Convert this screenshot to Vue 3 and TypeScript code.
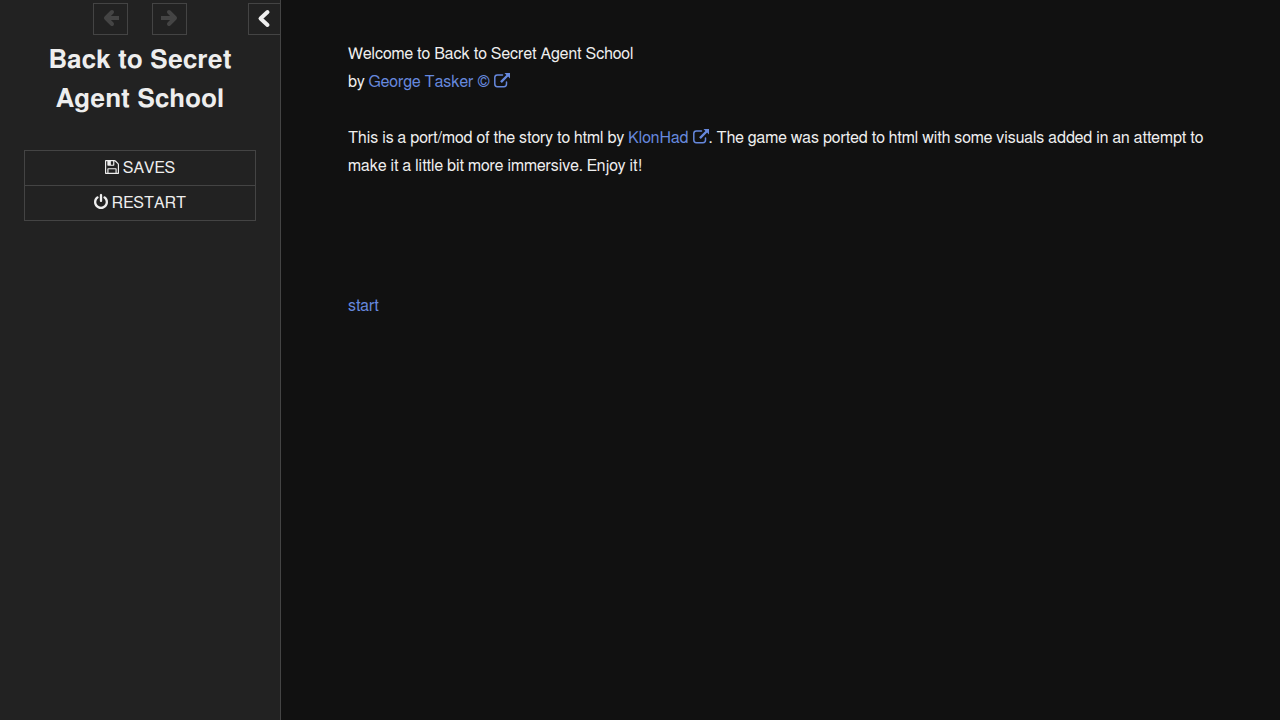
<script setup lang="ts">
import { ref } from 'vue'

const stowed = ref(false)

const icons = {
  save: 'M512 1536h768v-384h-768v384zm896 0h128v-896q0-14-10-38.5t-20-34.5l-281-281q-10-10-34-20t-39-10v416q0 40-28 68t-68 28h-576q-40 0-68-28t-28-68v-416h-128v1280h128v-416q0-40 28-68t68-28h832q40 0 68 28t28 68v416zm-384-928v-320q0-13-9.5-22.5t-22.5-9.5h-192q-13 0-22.5 9.5t-9.5 22.5v320q0 13 9.5 22.5t22.5 9.5h192q13 0 22.5-9.5t9.5-22.5zm640 32v928q0 40-28 68t-68 28h-1344q-40 0-68-28t-28-68v-1344q0-40 28-68t68-28h928q40 0 88 20t76 48l280 280q28 28 48 76t20 88z',
  power: 'M1664 896q0 156-61 298t-164 245-245 164-298 61-298-61-245-164-164-245-61-298q0-182 80.5-343t226.5-270q43-32 95.5-25t83.5 50q32 42 24.5 94.5t-49.5 84.5q-98 74-151.5 181t-53.5 228q0 104 40.5 198.5t109.5 163.5 163.5 109.5 198.5 40.5 198.5-40.5 163.5-109.5 109.5-163.5 40.5-198.5q0-121-53.5-228t-151.5-181q-42-32-49.5-84.5t24.5-94.5q31-43 84-50t95 25q146 109 226.5 270t80.5 343zm-640-768v640q0 52-38 90t-90 38-90-38-38-90v-640q0-52 38-90t90-38 90 38 38 90z',
  linkFrame: 'M8.500 2H3.4A2.6 2.6 0 0 0 .8 4.6v6.500a2.6 2.6 0 0 0 2.6 2.6h6.500a2.6 2.6 0 0 0 2.6-2.6V9',
  linkArrow: 'M10.500 0H16v5.500l-1.900-1.900-6.300 6.300-1.700-1.700 6.300-6.300z',
}

const menu = [
  { label: 'SAVES', icon: icons.save },
  { label: 'RESTART', icon: icons.power },
]
</script>

<template>
  <div class="game">
    <aside class="bar" :class="{ stowed }">
      <div class="tray">
        <div v-show="!stowed" class="history">
          <button type="button" disabled aria-label="Go backward">
            <svg class="tray-icon" viewBox="0 0 17 16"><path d="M10 2L4 8l6 6" /><path class="tail" d="M5 8h12" /></svg>
          </button>
          <button type="button" disabled aria-label="Go forward">
            <svg class="tray-icon" viewBox="0 0 17 16"><path d="M8 2l6 6-6 6" /><path class="tail" d="M0 8h13" /></svg>
          </button>
        </div>
        <button type="button" class="toggle" aria-label="Toggle the side bar" @click="stowed = !stowed">
          <svg class="tray-icon" viewBox="0 0 17 16"><path d="M11.500 2L4.500 8.500l7 6.500" /></svg>
        </button>
      </div>
      <div v-show="!stowed" class="bar-body">
        <h1>Back to Secret Agent School</h1>
        <ul class="menu">
          <li v-for="item in menu" :key="item.label">
            <button type="button">
              <svg class="menu-icon" viewBox="128 128 1536 1536"><path :d="item.icon" /></svg>
              <span>{{ item.label }}</span>
            </button>
          </li>
        </ul>
      </div>
    </aside>
    <main class="story">
      <div class="passage">
        <p>
          Welcome to Back to Secret Agent School<br />
          by <a href="#author">George Tasker © <svg class="external" viewBox="0 0 16 16"><path class="frame" :d="icons.linkFrame" /><path :d="icons.linkArrow" /></svg></a>
        </p>
        <p>
          This is a port/mod of the story to html by <a href="#porter">KlonHad <svg class="external" viewBox="0 0 16 16"><path class="frame" :d="icons.linkFrame" /><path :d="icons.linkArrow" /></svg></a>. The game was ported to html with some visuals added in an attempt to make it a little bit more immersive. Enjoy it!
        </p>
        <p class="start"><a href="#start">start</a></p>
      </div>
    </main>
  </div>
</template>

<style>
body {
  margin: 0;
  background: #111;
}
</style>

<style scoped>
.game {
  display: flex;
  min-height: 100vh;
  background: #111;
  color: #eee;
  font: 16px/28px FreeSans, "Nimbus Sans", "Liberation Sans", Arial, sans-serif;
  font-kerning: none;
}

svg {
  fill: currentColor;
  overflow: visible;
}

button {
  box-sizing: border-box;
  margin: 0;
  border: 1px solid #444;
  background: transparent;
  color: #eee;
  font: inherit;
  font-kerning: none;
  cursor: pointer;
}

.bar {
  box-sizing: border-box;
  flex: none;
  width: 281px;
  border-right: 1px solid #444;
  background: #222;
  text-align: center;
}

.bar.stowed {
  width: 34px;
}

.tray {
  display: flex;
  justify-content: flex-end;
  padding-top: 3px;
}

.tray button {
  display: flex;
  align-items: center;
  justify-content: center;
  width: 35px;
  height: 32px;
  padding: 0 0 2px;
}

.tray button:disabled {
  color: #444;
  cursor: default;
}

.history {
  display: flex;
  gap: 24px;
  margin-right: 61px;
}

.tray .toggle {
  width: 32px;
  border-right: 0;
}

.tray-icon {
  width: 17px;
  height: 16px;
  fill: none;
  stroke: currentColor;
  stroke-width: 4;
  stroke-linecap: round;
  stroke-linejoin: round;
}

.tail {
  stroke-linecap: butt;
}

.bar-body {
  padding: 6px 24px 0;
}

h1 {
  margin: 0;
  font-size: 26px;
  line-height: 39px;
}

.menu {
  margin: 31px 0 0;
  padding: 0;
  border: 1px solid #444;
  list-style: none;
}

.menu li + li {
  border-top: 1px solid #444;
}

.menu button {
  display: flex;
  align-items: center;
  justify-content: center;
  gap: 4px;
  width: 100%;
  height: 34px;
  padding: 0;
  border: 0;
}

.menu-icon {
  width: 14px;
  height: 14px;
  margin-bottom: 2px;
}

.story {
  flex: 1;
  min-width: 0;
  padding: 40px 67px;
}

.passage {
  max-width: 864px;
}

p {
  margin: 0 0 28px;
}

.start {
  margin-top: 112px;
}

a {
  color: #68d;
  text-decoration: none;
}

a:hover {
  color: #8af;
  text-decoration: underline;
}

.external {
  width: 16px;
  height: 16px;
  vertical-align: -2px;
}

.frame {
  fill: none;
  stroke: currentColor;
  stroke-width: 1.5;
  stroke-linecap: round;
}
</style>
